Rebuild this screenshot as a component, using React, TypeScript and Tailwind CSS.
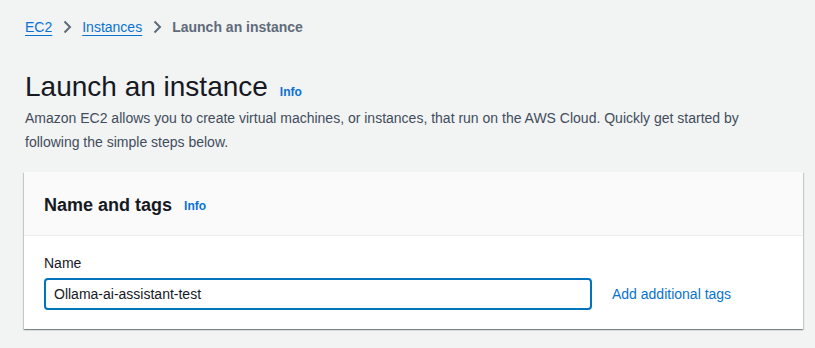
import React from 'react';

const Chevron = () => (
  <svg width="16" height="16" viewBox="0 0 16 16" className="text-[#5f6b7a] shrink-0">
    <path d="M5.5 2.5 11 8l-5.5 5.5" fill="none" stroke="currentColor" strokeWidth="2" />
  </svg>
);

const Info = ({ className = '' }: { className?: string }) => (
  <span className={`text-[12px] font-bold text-[#0972d3] ${className}`}>Info</span>
);

export default function App() {
  return (
    <div className="min-h-[348px] w-full bg-[#f2f3f3] font-['Liberation_Sans',Arial,sans-serif] text-[#16191f] px-[24px] pt-[17px]">
      {/* Breadcrumbs */}
      <nav className="flex items-center gap-[7px] text-[14px] leading-[20px] pl-[1px]">
        <span className="text-[#0972d3] underline underline-offset-[3px]">EC2</span>
        <Chevron />
        <span className="text-[#0972d3] underline underline-offset-[3px]">Instances</span>
        <Chevron />
        <span className="font-bold text-[#5f6b7a]">Launch an instance</span>
      </nav>

      {/* Header */}
      <div className="mt-[33px] flex items-baseline gap-[12px] pl-[1px]">
        <h1 className="text-[28px] leading-[34px] font-normal">Launch an instance</h1>
        <Info />
      </div>
      <p className="mt-[2px] text-[14px] leading-[24px] text-[#414d5c] max-w-[750px] pl-[1px]">
        Amazon EC2 allows you to create virtual machines, or instances, that run on the AWS Cloud. Quickly get started by following the simple steps below.
      </p>

      {/* Card */}
      <div className="mt-[18px] w-[779px] bg-white shadow-[0_1px_1px_0_rgba(0,28,36,0.3),1px_1px_1px_0_rgba(0,28,36,0.15),-1px_1px_1px_0_rgba(0,28,36,0.15)]">
        <div className="h-[64px] bg-[#fafafa] border-b border-[#eaeded] flex items-center px-[20px] gap-[12px]">
          <h2 className="text-[18px] font-bold leading-[22px] mt-[2px]">Name and tags</h2>
          <Info className="mt-[5px] text-[11px]" />
        </div>
        <div className="px-[20px] pt-[17px] pb-[19px]">
          <label className="block text-[14px] leading-[20px] mb-[5px]">Name</label>
          <div className="flex items-center gap-[20px]">
            <div className="w-[548px] h-[32px] border-2 border-[#0073bb] rounded-[4px] flex items-center px-[8px] text-[14px]">
              Ollama-ai-assistant-test
            </div>
            <span className="text-[14px] text-[#0972d3]">Add additional tags</span>
          </div>
        </div>
      </div>
    </div>
  );
}
